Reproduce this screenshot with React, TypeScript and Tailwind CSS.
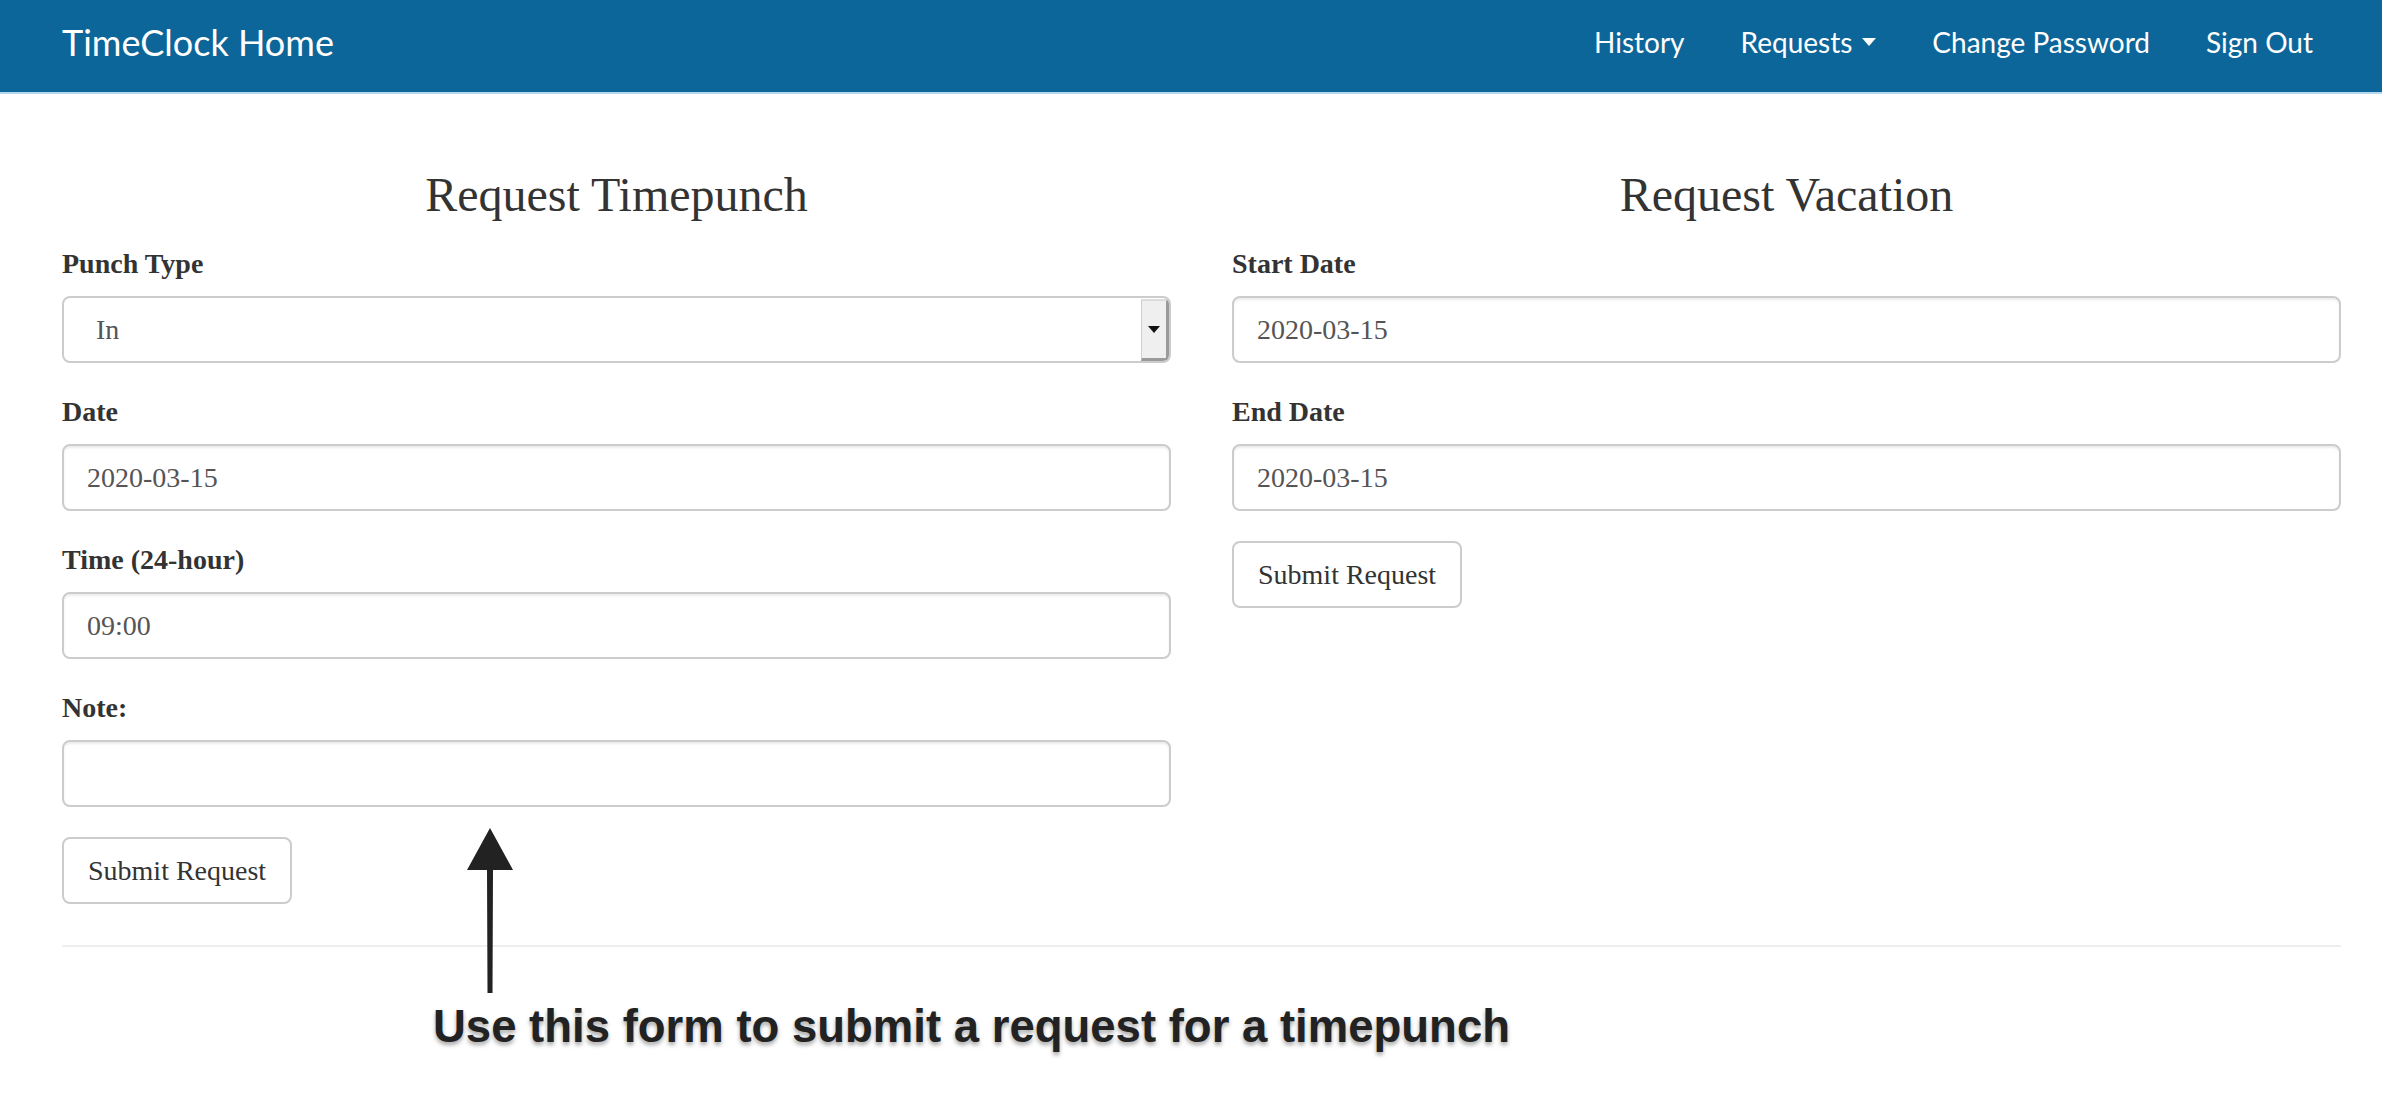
import React from "react";

const serif = "font-['Liberation_Serif','Times_New_Roman',serif]";

const navItems = ["History", "Requests", "Change Password", "Sign Out"];

function Label({ children }: { children: React.ReactNode }) {
  return <label className="block text-[28px] leading-[31px] font-bold text-[#333] mb-[17px]">{children}</label>;
}

function TextInput({ value }: { value: string }) {
  return (
    <div className="h-[67px] w-full border-2 border-[#ccc] rounded-[8px] bg-white px-[23px] flex items-center text-[28px] text-[#555] shadow-[inset_0_2px_2px_rgba(0,0,0,0.075)]">
      {value}
    </div>
  );
}

function SelectInput({ value }: { value: string }) {
  return (
    <div className="h-[67px] w-full border-2 border-[#ccc] rounded-[8px] bg-white flex items-stretch text-[28px] text-[#555] overflow-hidden">
      <div className="flex-1 flex items-center pl-[32px]">{value}</div>
      {/* native-looking arrow button */}
      <div className="w-[28px] mt-[1px] bg-[#efefef] border-l border-l-[#d0d0d0] border-t-2 border-t-[#dcdcdc] border-r-[3px] border-r-[#9a9a9a] border-b-[3px] border-b-[#9a9a9a] flex items-center justify-center">
        <div className="w-0 h-0 border-l-[6px] border-r-[6px] border-t-[7px] border-l-transparent border-r-transparent border-t-[#111]" />
      </div>
    </div>
  );
}

function Field({ label, children }: { label: string; children: React.ReactNode }) {
  return (
    <div className="mb-[33px]">
      <Label>{label}</Label>
      {children}
    </div>
  );
}

function SubmitButton() {
  return (
    <button className="h-[67px] px-[24px] border-2 border-[#ccc] rounded-[8px] bg-white text-[28px] text-[#333]">
      Submit Request
    </button>
  );
}

export default function App() {
  return (
    <div className={`relative min-h-[1103px] bg-white ${serif}`}>
      {/* Navbar */}
      <nav className="h-[94px] bg-[#0d6699] border-b-2 border-[#b5d8ef] flex items-center justify-between pl-[62px] pr-[41px] pb-[8px] font-['Lato',sans-serif] text-white">
        <div className="text-[36px] leading-none">TimeClock Home</div>
        <ul className="flex items-center">
          {navItems.map((item) => (
            <li key={item} className="px-[28px] text-[28px] leading-none flex items-center">
              {item}
              {item === "Requests" && (
                <span className="ml-[10px] w-0 h-0 border-l-[7px] border-r-[7px] border-t-[8px] border-l-transparent border-r-transparent border-t-white" />
              )}
            </li>
          ))}
        </ul>
      </nav>

      <main className="pl-[62px] pr-[41px]">
        <div className="grid grid-cols-2 gap-x-[61px]">
          {/* Request Timepunch */}
          <section>
            <h2 className="mt-[74px] mb-[27px] text-center text-[48px] leading-[53px] text-[#333]">Request Timepunch</h2>
            <Field label="Punch Type">
              <SelectInput value="In" />
            </Field>
            <Field label="Date">
              <TextInput value="2020-03-15" />
            </Field>
            <Field label="Time (24-hour)">
              <TextInput value="09:00" />
            </Field>
            <Field label="Note:">
              <TextInput value="" />
            </Field>
            <div className="-mt-[3px]">
              <SubmitButton />
            </div>
          </section>

          {/* Request Vacation */}
          <section>
            <h2 className="mt-[74px] mb-[27px] text-center text-[48px] leading-[53px] text-[#333]">Request Vacation</h2>
            <Field label="Start Date">
              <TextInput value="2020-03-15" />
            </Field>
            <Field label="End Date">
              <TextInput value="2020-03-15" />
            </Field>
            <div className="-mt-[3px]">
              <SubmitButton />
            </div>
          </section>
        </div>

        <hr className="mt-[41px] border-0 border-t-2 border-[#eee]" />

        <p className="mt-[57px] pl-[371px] font-['Liberation_Sans',Arial,sans-serif] font-bold text-[45.5px] leading-none text-[#222] [text-shadow:0_3px_4px_rgba(0,0,0,0.35)]">
          Use this form to submit a request for a timepunch
        </p>
      </main>

      {/* annotation arrow */}
      <svg className="absolute left-[466px] top-[828px]" width="48" height="166" viewBox="0 0 48 166">
        <polygon points="24,0 47,42 27,42 26.5,165 21.5,165 21,42 1,42" fill="#222" />
      </svg>
    </div>
  );
}
